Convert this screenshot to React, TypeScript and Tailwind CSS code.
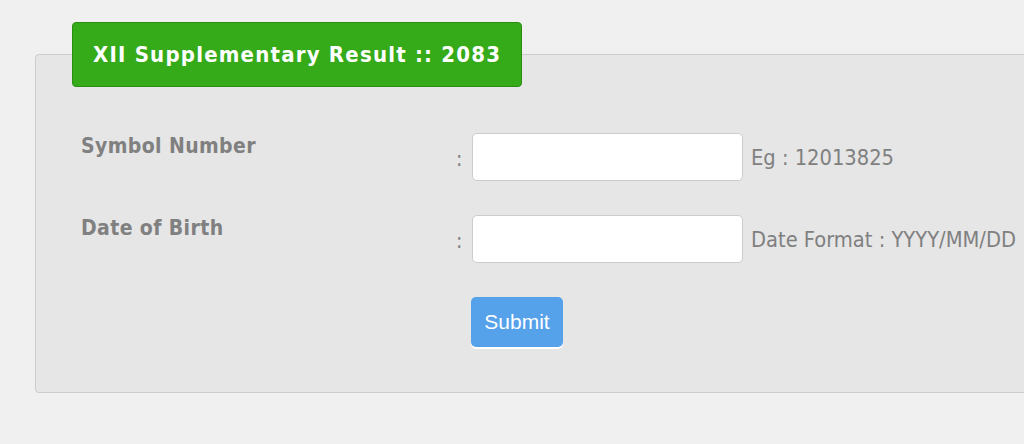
import { useState, ChangeEvent, FormEvent } from "react";

const hintFont = { fontFamily: '"DejaVu Sans Condensed", "DejaVu Sans", Verdana, sans-serif' };

const App = () => {
  const [symbol, setSymbol] = useState("");
  const [dob, setDob] = useState("");

  const handleSubmit = (e: FormEvent) => {
    e.preventDefault();
  };

  return (
    <div
      className="w-full h-[444px] overflow-hidden bg-[#f0f0f0] pt-[22px]"
      style={hintFont}
    >
      <form onSubmit={handleSubmit}>
        <fieldset className="ml-[35px] w-[1100px] border border-[#cccccc] rounded-[4px] bg-[#e6e6e6] pl-[36px] pb-[45px]">
          <legend className="bg-[#36ab19] border border-[#2b8d12] rounded-[4px] px-[20px] h-[65px] flex items-center text-white font-bold text-[22px] tracking-[1.2px]">
            XII Supplementary Result :: 2083
          </legend>

          <div className="grid grid-cols-[384px_16px_271px_auto] gap-y-[34px] pt-[46px] text-[#808080]">
            <div className="pl-[9px] pt-[1px] font-bold text-[21px] tracking-[0.4px] leading-[24px]">Symbol Number</div>
            <div className="pt-[11px] text-[21px]">:</div>
            <input
              className="h-[48px] bg-white border border-[#cccccc] rounded-[5px] px-2 outline-none"
              type="text"
              name="symbol"
              value={symbol}
              onChange={(e: ChangeEvent<HTMLInputElement>) => setSymbol(e.target.value)}
            />
            <div className="pl-[8px] pt-[9px] text-[21.7px] whitespace-nowrap">Eg : 12013825</div>

            <div className="pl-[9px] pt-[1px] font-bold text-[21px] tracking-[0.4px] leading-[24px]">Date of Birth</div>
            <div className="pt-[11px] text-[21px]">:</div>
            <input
              className="h-[48px] bg-white border border-[#cccccc] rounded-[5px] px-2 outline-none"
              type="text"
              name="dob"
              value={dob}
              onChange={(e: ChangeEvent<HTMLInputElement>) => setDob(e.target.value)}
            />
            <div className="pl-[8px] pt-[9px] text-[21.7px] whitespace-nowrap">Date Format : YYYY/MM/DD</div>

            <div />
            <div />
            <div>
              <button
                type="submit"
                className="ml-[-1px] h-[50px] w-[92px] bg-[#55a1ea] text-white rounded-[5px] text-[21px] shadow-[0_2px_0_#ffffff]"
                style={{ fontFamily: '"Liberation Sans", Arial, sans-serif' }}
              >
                Submit
              </button>
            </div>
            <div />
          </div>
        </fieldset>
      </form>
    </div>
  );
};

export default App;
